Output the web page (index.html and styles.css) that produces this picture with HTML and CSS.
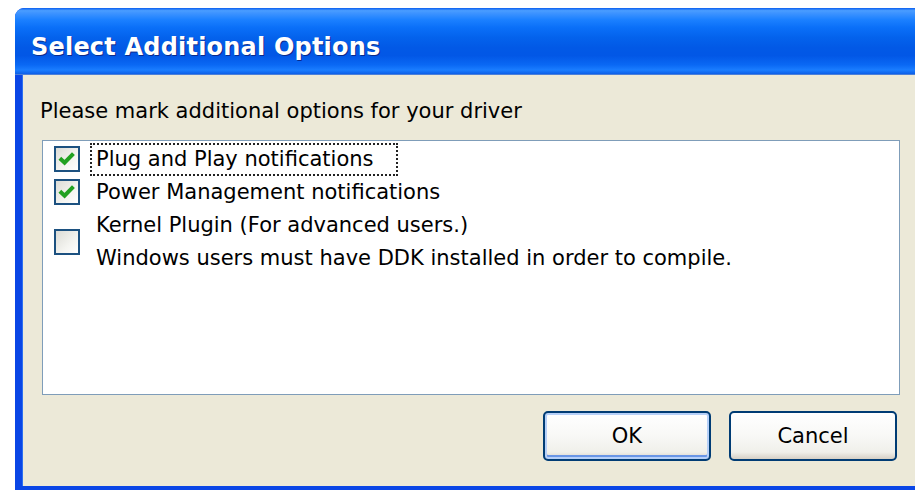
FILE: index.html
```html
<!DOCTYPE html>
<html>
<head>
<meta charset="utf-8">
<link rel="stylesheet" href="styles.css">
</head>
<body>
<div class="window">
  <div class="titlebar"><span class="title">Select Additional Options</span></div>
  <div class="client">
    <div class="prompt">Please mark additional options for your driver</div>
    <div class="listbox">
      <div class="item">
        <span class="check checked"><svg viewBox="0 0 14 14" width="14" height="14"><path d="M2 6.5 L5.3 9.6 L11.5 3.2" fill="none" stroke="#21a121" stroke-width="2.8" stroke-linecap="butt"/></svg></span>
        <span class="label"><span class="focus">Plug and Play notifications</span></span>
      </div>
      <div class="item">
        <span class="check checked"><svg viewBox="0 0 14 14" width="14" height="14"><path d="M2 6.5 L5.3 9.6 L11.5 3.2" fill="none" stroke="#21a121" stroke-width="2.8" stroke-linecap="butt"/></svg></span>
        <span class="label">Power Management notifications</span>
      </div>
      <div class="item multi">
        <span class="check"></span>
        <span class="label">Kernel Plugin (For advanced users.)<br>Windows users must have DDK installed in order to compile.</span>
      </div>
    </div>
    <div class="buttons">
      <button class="btn default">OK</button>
      <button class="btn">Cancel</button>
    </div>
  </div>
</div>
</body>
</html>
```

FILE: styles.css
```css
html, body {
  margin: 0;
  padding: 0;
  background: #ffffff;
  overflow: hidden;
  width: 915px;
  height: 490px;
}
body {
  font-family: "DejaVu Sans", "Liberation Sans", sans-serif;
  font-size: 21px;
  color: #000;
}
.window {
  margin: 8px 0 0 15px;
  width: 920px;
  height: 482px;
  display: flex;
  flex-direction: column;
  border-radius: 9px 9px 0 0;
  overflow: hidden;
  background: #0842e6;
}
.titlebar {
  height: 66px;
  flex: none;
  display: flex;
  align-items: center;
  padding-left: 16px;
  background: linear-gradient(to bottom,
    #0a5ef0 0%, #4a9dff 4%, #3d93ff 8%, #1b80ff 18%, #0a6ff8 30%,
    #0462ec 45%, #0259e6 60%, #0257e6 72%, #0a68f4 86%, #1a7dff 94%, #0c5fe8 100%);
  border-bottom: 1px solid #4b7fd8;
}
.title {
  color: #fff;
  font-weight: bold;
  font-size: 24px;
  letter-spacing: 0.2px;
  text-shadow: 1px 1px 0 #0a2a8c;
  margin-top: 12px;
}
.client {
  flex: 1;
  background: #ece9d8;
  border-left: 7px solid #0a46e6;
  border-bottom: 4px solid #0a46e6;
  box-shadow: inset 1px 0 0 #2c6ff0;
  padding: 21px 0 0 18px;
  display: flex;
  flex-direction: column;
}
.prompt {
  height: 30px;
  line-height: 30px;
}
.listbox {
  margin: 14px 0 0 2px;
  width: 845px;
  height: 251px;
  background: #fff;
  border: 1px solid #7f9db9;
  padding: 2px 0 0 11px;
}
.item {
  display: flex;
  align-items: center;
  height: 34px;
}
.item:first-child { height: 32px; }
.item.multi { height: 66px; }
.check {
  flex: none;
  width: 22px;
  height: 22px;
  border: 2px solid #1c5180;
  background: linear-gradient(135deg, #dcdcd6 0%, #f4f4f0 60%, #ffffff 100%);
  display: flex;
  align-items: center;
  justify-content: center;
  margin-right: 16px;
}
.check svg { width: 20px; height: 20px; }
.label {
  line-height: 33px;
  white-space: nowrap;
}
.focus {
  outline: 2px dotted #222;
  outline-offset: 0;
  padding: 0 22px 0 4px;
  margin-left: -4px;
  display: inline-block;
  line-height: 29px;
}
.buttons {
  display: flex;
  justify-content: flex-end;
  gap: 18px;
  width: 855px;
  margin: 16px 0 0 2px;
}
.btn {
  width: 168px;
  height: 50px;
  font-family: inherit;
  font-size: 21px;
  color: #000;
  border: 2px solid #003c74;
  border-radius: 5px;
  background: linear-gradient(to bottom, #ffffff 0%, #f8f8f6 50%, #f0f0ea 85%, #d6d0c5 100%);
  padding: 0;
}
.btn.default {
  box-shadow: inset 0 0 0 2px #b6d0f8, inset 0 -2px 0 2px #6a96e6;
}
```
